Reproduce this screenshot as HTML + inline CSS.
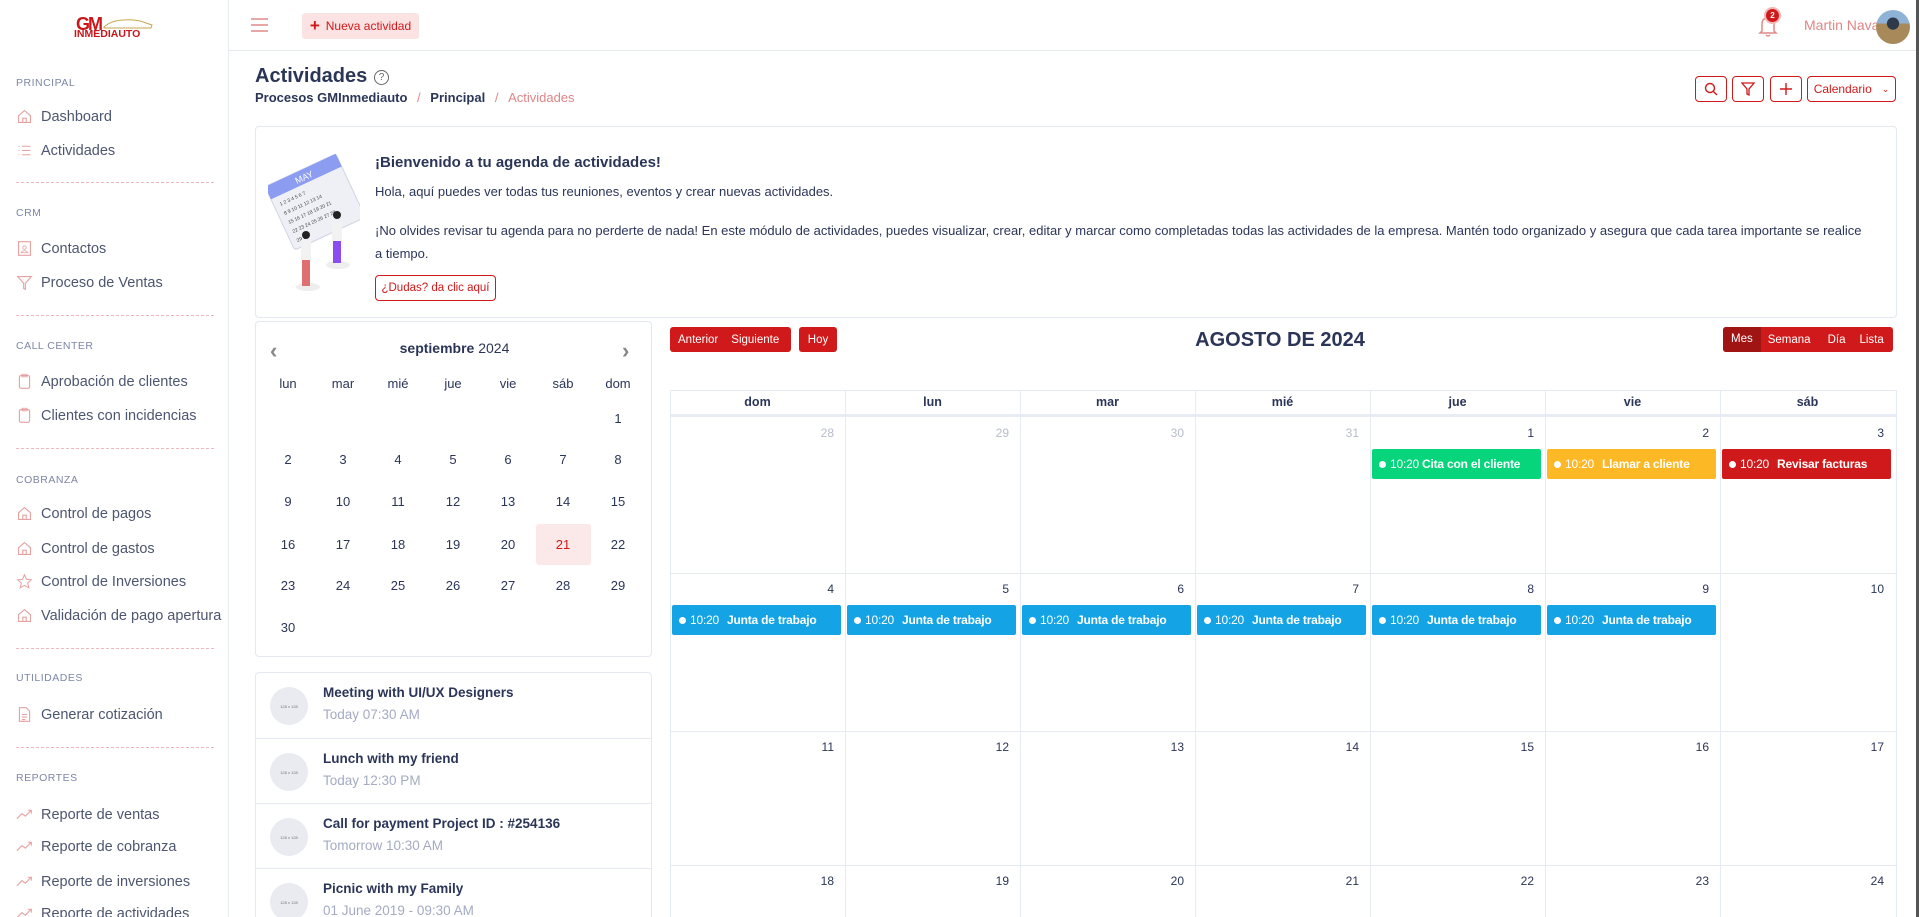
<!DOCTYPE html>
<html><head><meta charset="utf-8">
<style>
*{box-sizing:border-box;margin:0;padding:0}
html,body{width:1919px;height:917px;overflow:hidden}
body{background:#fff;font-family:"Liberation Sans",sans-serif;color:#2b3558;position:relative}
.a{position:absolute;white-space:nowrap}
.sb{position:absolute;left:0;top:0;width:229px;height:917px;border-right:1px solid #e6eaf2;background:#fff}
.sec{position:absolute;left:16px;font-size:10.5px;color:#7d86a6;letter-spacing:.5px}
.it{position:absolute;left:16px;font-size:14.5px;color:#4d5670;display:flex;align-items:center;gap:8px}
.it svg{width:17px;height:17px;flex:none}
.dash{position:absolute;left:16px;width:198px;border-top:1px dashed #f0b8bc}
.top{position:absolute;left:229px;top:0;right:0;height:51px;border-bottom:1px solid #e6eaf2}
.card{position:absolute;border:1px solid #e3e8f2;border-radius:4px;background:#fff}
.ob{position:absolute;top:76px;height:26px;border:1px solid #d0191a;border-radius:4px;display:flex;align-items:center;justify-content:center;color:#d0191a;font-size:12px}
.mc{position:absolute;width:40px;text-align:center;font-size:13px;color:#2b3558}
.li{position:absolute;left:0;width:396px;height:65px;border-top:1px solid #e3e8f2}
.li .av{position:absolute;left:14px;top:14px;width:38px;height:38px;border-radius:50%;background:#e9ebf1;font-size:4px;color:#777;display:flex;align-items:center;justify-content:center}
.li .t{position:absolute;left:67px;top:12px;font-size:13.5px;font-weight:bold;color:#2b3558}
.li .s{position:absolute;left:67px;top:34px;font-size:13.5px;color:#a4abc2}
.btn{position:absolute;top:327px;height:25px;background:#d0191a;color:#fff;font-size:11.5px;border-radius:3px;display:flex;align-items:center}
.vl{position:absolute;top:390px;width:1px;height:527px;background:#e6eaf2}
.hl{position:absolute;left:670px;width:1226px;height:1px;background:#e6eaf2}
.hd{position:absolute;top:390px;width:175px;height:24px;line-height:24px;text-align:center;font-size:12.5px;font-weight:bold;color:#2b3558}
.dn{position:absolute;width:160px;text-align:right;font-size:12px;color:#2b3558}
.ev{position:absolute;height:30px;width:169px;border-radius:2px;color:#fff;font-size:12px;letter-spacing:-.2px;display:flex;align-items:center;padding-left:7px;white-space:nowrap;overflow:hidden}
.ev i{display:inline-block;width:7px;height:7px;border-radius:50%;background:#fff;margin-right:4px;flex:none}
.ev b{margin-left:6px}
</style></head><body>

<div class="sb">
  <div class="a" style="left:74px;top:14px;width:84px;height:28px">
    <div class="a" style="left:2px;top:0;font:bold 18px 'Liberation Sans',sans-serif;color:#c8161b;letter-spacing:-2px">GM</div>
    <svg class="a" style="left:28px;top:2px" width="52" height="14" viewBox="0 0 52 14"><path d="M2 11 Q10 4 22 4 Q34 3 44 7 L50 9 L49 12 L2 12Z" fill="none" stroke="#c9a64a" stroke-width="1"/></svg>
    <div class="a" style="left:0;top:14px;font:bold 10.5px 'Liberation Sans',sans-serif;color:#c8161b">INMEDIAUTO</div>
  </div>
  <div class="sec" style="top:77px">PRINCIPAL</div>
  <div class="it" style="top:108px"><svg viewBox="0 0 20 20"><path d="M3 9 L10 3 L17 9 V17 H3Z M8 17 V12 H12 V17" fill="none" stroke="#e6a1a1" stroke-width="1.3"/></svg>Dashboard</div>
  <div class="it" style="top:142px"><svg viewBox="0 0 20 20"><path d="M3 5h1M7 5h10M3 10h1M7 10h10M3 15h1M7 15h10" stroke="#e6a1a1" stroke-width="1.3"/></svg>Actividades</div>
  <div class="dash" style="top:182px"></div>
  <div class="sec" style="top:207px">CRM</div>
  <div class="it" style="top:240px"><svg viewBox="0 0 20 20"><rect x="3" y="2" width="14" height="16" fill="none" stroke="#e6a1a1" stroke-width="1.3"/><circle cx="10" cy="9" r="2" fill="none" stroke="#e6a1a1"/><path d="M6 15 Q10 10 14 15Z" fill="none" stroke="#e6a1a1"/></svg>Contactos</div>
  <div class="it" style="top:274px"><svg viewBox="0 0 20 20"><path d="M2 3 H18 L11 11 V18 L9 17 V11Z" fill="none" stroke="#e6a1a1" stroke-width="1.3"/></svg>Proceso de Ventas</div>
  <div class="dash" style="top:315px"></div>
  <div class="sec" style="top:340px">CALL CENTER</div>
  <div class="it" style="top:373px"><svg viewBox="0 0 20 20"><rect x="4" y="3" width="12" height="15" rx="2" fill="none" stroke="#e6a1a1" stroke-width="1.3"/><rect x="7" y="1.5" width="6" height="3" fill="none" stroke="#e6a1a1"/></svg>Aprobación de clientes</div>
  <div class="it" style="top:407px"><svg viewBox="0 0 20 20"><rect x="4" y="3" width="12" height="15" rx="2" fill="none" stroke="#e6a1a1" stroke-width="1.3"/><rect x="7" y="1.5" width="6" height="3" fill="none" stroke="#e6a1a1"/></svg>Clientes con incidencias</div>
  <div class="dash" style="top:448px"></div>
  <div class="sec" style="top:474px">COBRANZA</div>
  <div class="it" style="top:505px"><svg viewBox="0 0 20 20"><path d="M3 9 L10 3 L17 9 V17 H3Z M8 17 V12 H12 V17" fill="none" stroke="#e6a1a1" stroke-width="1.3"/></svg>Control de pagos</div>
  <div class="it" style="top:540px"><svg viewBox="0 0 20 20"><path d="M3 9 L10 3 L17 9 V17 H3Z M8 17 V12 H12 V17" fill="none" stroke="#e6a1a1" stroke-width="1.3"/></svg>Control de gastos</div>
  <div class="it" style="top:573px"><svg viewBox="0 0 20 20"><path d="M10 2 L12.4 7.5 L18 8 L13.7 11.8 L15 17.5 L10 14.5 L5 17.5 L6.3 11.8 L2 8 L7.6 7.5Z" fill="none" stroke="#e6a1a1" stroke-width="1.2"/></svg>Control de Inversiones</div>
  <div class="it" style="top:607px"><svg viewBox="0 0 20 20"><path d="M3 9 L10 3 L17 9 V17 H3Z M8 17 V12 H12 V17" fill="none" stroke="#e6a1a1" stroke-width="1.3"/></svg>Validación de pago apertura</div>
  <div class="dash" style="top:648px"></div>
  <div class="sec" style="top:672px">UTILIDADES</div>
  <div class="it" style="top:706px"><svg viewBox="0 0 20 20"><path d="M4 2 H12 L16 6 V18 H4Z M7 10h6M7 13h6M7 16h4" fill="none" stroke="#e6a1a1" stroke-width="1.3"/></svg>Generar cotización</div>
  <div class="dash" style="top:747px"></div>
  <div class="sec" style="top:772px">REPORTES</div>
  <div class="it" style="top:806px"><svg viewBox="0 0 20 20"><path d="M1 15 L7 9 L11 12 L18 5 M14 5 H18 V9" fill="none" stroke="#e6a1a1" stroke-width="1.3"/></svg>Reporte de ventas</div>
  <div class="it" style="top:838px"><svg viewBox="0 0 20 20"><path d="M1 15 L7 9 L11 12 L18 5 M14 5 H18 V9" fill="none" stroke="#e6a1a1" stroke-width="1.3"/></svg>Reporte de cobranza</div>
  <div class="it" style="top:873px"><svg viewBox="0 0 20 20"><path d="M1 15 L7 9 L11 12 L18 5 M14 5 H18 V9" fill="none" stroke="#e6a1a1" stroke-width="1.3"/></svg>Reporte de inversiones</div>
  <div class="it" style="top:905px"><svg viewBox="0 0 20 20"><path d="M1 15 L7 9 L11 12 L18 5 M14 5 H18 V9" fill="none" stroke="#e6a1a1" stroke-width="1.3"/></svg>Reporte de actividades</div>
</div>

<div class="top">
  <svg class="a" style="left:22px;top:18px" width="17" height="14" viewBox="0 0 17 14"><path d="M0 1h17M0 7h17M0 13h17" stroke="#e08a8a" stroke-width="1.6"/></svg>
  <div class="a" style="left:73px;top:13px;width:117px;height:26px;background:#fbe3e3;border-radius:3px;color:#d0191a;font-size:12px;display:flex;align-items:center;justify-content:center;gap:6px"><b style="font-size:17px;font-weight:bold">+</b>Nueva actividad</div>
  <svg class="a" style="left:1529px;top:14px" width="20" height="24" viewBox="0 0 20 24"><path d="M4 17 V10 Q4 4 10 4 Q16 4 16 10 V17 L18 19 H2Z M8 21 Q10 23 12 21" fill="none" stroke="#e08a8a" stroke-width="1.5"/></svg>
  <div class="a" style="left:1537px;top:9px;width:13px;height:13px;border-radius:50%;background:#d0191a;color:#fff;font-size:8px;font-weight:bold;text-align:center;line-height:13px;box-shadow:0 0 0 2px #f4b6b6">2</div>
  <div class="a" style="left:1575px;top:17px;font-size:14px;color:#df8686">Martin Nava</div>
  <div class="a" style="left:1647px;top:10px;width:34px;height:34px;border-radius:50%;background:radial-gradient(circle at 50% 40%,#2d3848 0 22%,transparent 24%),linear-gradient(#8fb3d6 0 40%,#a88a5a 40%)"></div>
</div>
<div class="a" style="left:1916px;top:0;width:3px;height:917px;background:#555"></div>

<div class="a" style="left:255px;top:65px;font-size:20px;font-weight:bold;color:#2b3558">Actividades</div>
<div class="a" style="left:374px;top:70px;width:15px;height:15px;border:1.3px solid #666;border-radius:50%;font-size:10px;text-align:center;line-height:13px;color:#666">?</div>
<div class="a" style="left:255px;top:90px;font-size:13px;font-weight:bold;color:#2b3558">Procesos GMInmediauto <span style="color:#e08a8a;font-weight:normal;margin:0 6px">/</span> Principal <span style="color:#e08a8a;font-weight:normal;margin:0 6px">/</span> <span style="color:#df8686;font-weight:normal">Actividades</span></div>

<div class="ob" style="left:1695px;width:32px"><svg width="14" height="14" viewBox="0 0 14 14"><circle cx="6" cy="6" r="4.5" fill="none" stroke="#d0191a" stroke-width="1.4"/><path d="M9.5 9.5 L13 13" stroke="#d0191a" stroke-width="1.4"/></svg></div>
<div class="ob" style="left:1732px;width:32px"><svg width="14" height="14" viewBox="0 0 14 14"><path d="M1 1 H13 L8 7 V13 L6 12 V7Z" fill="none" stroke="#d0191a" stroke-width="1.3"/></svg></div>
<div class="ob" style="left:1770px;width:32px"><svg width="14" height="14" viewBox="0 0 14 14"><path d="M7 1V13M1 7H13" stroke="#d0191a" stroke-width="1.4"/></svg></div>
<div class="ob" style="left:1807px;width:89px">Calendario&nbsp;&nbsp;&nbsp;<span style="font-size:9px">&#8964;</span></div>

<div class="card" style="left:255px;top:126px;width:1642px;height:192px">
  <svg class="a" style="left:12px;top:10px" width="92" height="160" viewBox="0 0 92 160">
    <g transform="rotate(-25 46 60)">
      <rect x="6" y="30" width="78" height="70" rx="3" fill="#eef0f6" stroke="#cfd4e2"/>
      <rect x="6" y="30" width="78" height="14" fill="#8c9cf0"/>
      <text x="36" y="41" font-size="9" fill="#fff" font-family="Liberation Sans">MAY</text>
      <g font-size="5" fill="#444" font-family="Liberation Sans">
        <text x="12" y="54">1 2 3 4 5 6 7</text><text x="12" y="64">8 9 10 11 12 13 14</text><text x="12" y="74">15 16 17 18 19 20 21</text><text x="12" y="84">22 23 24 25 26 27 28</text><text x="12" y="94">29 30</text></g>
    </g>
    <ellipse cx="40" cy="150" rx="12" ry="4" fill="#eee"/><ellipse cx="70" cy="128" rx="12" ry="4" fill="#eee"/>
    <circle cx="38" cy="98" r="4" fill="#222"/><rect x="33" y="103" width="10" height="20" fill="#f2f2f2"/><rect x="34" y="123" width="8" height="26" fill="#e07070"/>
    <circle cx="69" cy="78" r="4" fill="#222"/><rect x="64" y="84" width="10" height="20" fill="#f2f2f2"/><rect x="65" y="104" width="8" height="22" fill="#8b4cf0"/>
  </svg>
  <div class="a" style="left:119px;top:27px;font-size:15px;font-weight:bold;color:#2b3558">¡Bienvenido a tu agenda de actividades!</div>
  <div class="a" style="left:119px;top:57px;font-size:13px;color:#2b3558">Hola, aquí puedes ver todas tus reuniones, eventos y crear nuevas actividades.</div>
  <div class="a" style="left:119px;top:92px;width:1490px;white-space:normal;font-size:13px;line-height:23px;color:#2b3558">¡No olvides revisar tu agenda para no perderte de nada! En este módulo de actividades, puedes visualizar, crear, editar y marcar como completadas todas las actividades de la empresa. Mantén todo organizado y asegura que cada tarea importante se realice a tiempo.</div>
  <div class="a" style="left:119px;top:148px;width:121px;height:26px;border:1px solid #d0191a;border-radius:4px;color:#d0191a;font-size:11.5px;text-align:center;line-height:24px">¿Dudas? da clic aquí</div>
</div>

<div class="card" style="left:255px;top:321px;width:397px;height:336px">
  <div class="a" style="left:14px;top:16px;font-size:22px;color:#888;font-weight:bold">&#8249;</div>
  <div class="a" style="left:366px;top:16px;font-size:22px;color:#888;font-weight:bold">&#8250;</div>
  <div class="a" style="left:0;width:397px;top:18px;text-align:center;font-size:14px;color:#2b3558"><b>septiembre</b> 2024</div>
</div>
<div class="a" style="left:536px;top:524px;width:55px;height:41px;background:#fbe8e8;border-radius:3px"></div>
<div id="mini"></div>

<div class="card" style="left:255px;top:672px;width:397px;height:245px;border-bottom:none;border-radius:4px 4px 0 0">
  <div class="li" style="top:0;border-top:none"><div class="av">128 x 128</div><div class="t">Meeting with UI/UX Designers</div><div class="s">Today 07:30 AM</div></div>
  <div class="li" style="top:65px"><div class="av">128 x 128</div><div class="t">Lunch with my friend</div><div class="s">Today 12:30 PM</div></div>
  <div class="li" style="top:130px"><div class="av">128 x 128</div><div class="t">Call for payment Project ID : #254136</div><div class="s">Tomorrow 10:30 AM</div></div>
  <div class="li" style="top:195px"><div class="av">128 x 128</div><div class="t">Picnic with my Family</div><div class="s">01 June 2019 - 09:30 AM</div></div>
</div>

<div class="btn" style="left:670px;width:121px"><span style="margin-left:8px">Anterior</span><span style="margin-left:13px">Siguiente</span></div>
<div class="btn" style="left:799px;width:38px;justify-content:center">Hoy</div>
<div class="a" style="left:1080px;width:400px;top:329px;text-align:center;font-size:20px;font-weight:bold;color:#2b3558">AGOSTO DE 2024</div>
<div class="btn" style="left:1723px;width:170px"><span style="background:#a01414;height:25px;line-height:25px;padding:0 8px;border-radius:3px 0 0 3px">Mes</span><span style="margin-left:7px">Semana</span><span style="margin-left:17px">Día</span><span style="margin-left:14px">Lista</span></div>

<div class="hl" style="top:390px"></div>
<div class="hl" style="top:414px;height:3px;background:#e8edf5"></div>
<div class="hl" style="top:573px"></div>
<div class="hl" style="top:731px"></div>
<div class="hl" style="top:865px"></div>
<div id="grid"></div>

<script>
var g='',cols=[670,845,1020,1195,1370,1545,1720,1896];
cols.forEach(function(x){g+='<div class="vl" style="left:'+x+'px"></div>';});
['dom','lun','mar','mié','jue','vie','sáb'].forEach(function(d,i){g+='<div class="hd" style="left:'+cols[i]+'px">'+d+'</div>';});
var rows=[417,573,731,865];
var nums=[[28,29,30,31,1,2,3],[4,5,6,7,8,9,10],[11,12,13,14,15,16,17],[18,19,20,21,22,23,24]];
nums.forEach(function(r,ri){r.forEach(function(n,ci){var c=(ri==0&&ci<4)?'#b7bccb':'#2b3558';g+='<div class="dn" style="left:'+(cols[ci]+4)+'px;top:'+(rows[ri]+9)+'px;color:'+c+'">'+n+'</div>';});});
function ev(ci,top,col,txt,m){g+='<div class="ev" style="left:'+(cols[ci]+2)+'px;top:'+top+'px;background:'+col+'"><i></i>10:20<b style="margin-left:'+m+'px">'+txt+'</b></div>';}
ev(4,449,'#06d57c','Cita con el cliente',3);ev(5,449,'#fdb825','Llamar a cliente',8);ev(6,449,'#d0191a','Revisar facturas',8);
for(var i=0;i<6;i++)ev(i,605,'#14a4e6','Junta de trabajo',8);
document.getElementById('grid').innerHTML=g;
var m='',cx=[288,343,398,453,508,563,618];
['lun','mar','mié','jue','vie','sáb','dom'].forEach(function(d,i){m+='<div class="mc" style="left:'+(cx[i]-20)+'px;top:376px">'+d+'</div>';});
var ry=[411,452,494,537,578,620],d=1,start=6;
for(var k=start;d<=30;k++){var r=Math.floor(k/7),c=k%7;m+='<div class="mc" style="left:'+(cx[c]-20)+'px;top:'+ry[r]+'px;'+(d==21?'color:#d0191a':'')+'">'+d+'</div>';d++;}
document.getElementById('mini').innerHTML=m;
</script>
</body></html>
